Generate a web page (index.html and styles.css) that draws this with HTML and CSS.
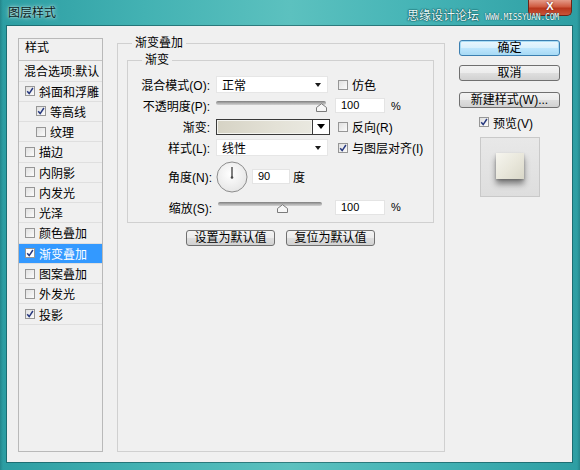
FILE: index.html
```html
<!DOCTYPE html>
<html>
<head>
<meta charset="utf-8">
<link rel="stylesheet" href="styles.css">
</head>
<body>
<div class="window">
  <div class="titlebar">
    <span class="title">图层样式</span>
    <span class="close">X</span>
    <span class="watermark"><span class="wm-cn">思缘设计论坛</span><span class="wm-en">WWW.MISSYUAN.COM</span></span>
  </div>
  <div class="client">
    <div class="styles-list">
      <div class="list-head">样式</div>
      <div class="list-row blend">混合选项:默认</div>
      <div class="list-row"><span class="cb"><svg viewBox="0 0 8 8"><path d="M1.2 4.2 L3.2 6.6 L6.9 1" /></svg></span>斜面和浮雕</div>
      <div class="list-row sub"><span class="cb"><svg viewBox="0 0 8 8"><path d="M1.2 4.2 L3.2 6.6 L6.9 1" /></svg></span>等高线</div>
      <div class="list-row sub"><span class="cb"></span>纹理</div>
      <div class="list-row"><span class="cb"></span>描边</div>
      <div class="list-row"><span class="cb"></span>内阴影</div>
      <div class="list-row"><span class="cb"></span>内发光</div>
      <div class="list-row"><span class="cb"></span>光泽</div>
      <div class="list-row"><span class="cb"></span>颜色叠加</div>
      <div class="list-row selected"><span class="cb"><svg viewBox="0 0 8 8"><path d="M1.2 4.2 L3.2 6.6 L6.9 1" /></svg></span>渐变叠加</div>
      <div class="list-row"><span class="cb"></span>图案叠加</div>
      <div class="list-row"><span class="cb"></span>外发光</div>
      <div class="list-row"><span class="cb"><svg viewBox="0 0 8 8"><path d="M1.2 4.2 L3.2 6.6 L6.9 1" /></svg></span>投影</div>
    </div>

    <fieldset class="group outer">
      <legend>渐变叠加</legend>
      <fieldset class="group inner">
        <legend>渐变</legend>
        <div class="form">
          <label class="lbl">混合模式(O):</label>
          <div class="select"><span>正常</span><i class="arrow"></i></div>
          <div class="check"><span class="cb"></span>仿色</div>

          <label class="lbl">不透明度(P):</label>
          <div class="slider op">
            <span class="track"></span>
            <svg class="thumb" viewBox="0 0 11 9"><path d="M0.5 8.5 V4.5 L5.5 0.7 L10.5 4.5 V8.5 Z" /></svg>
          </div>
          <div class="numrow"><span class="num">100</span><span class="unit">%</span></div>

          <label class="lbl">渐变:</label>
          <div class="grad"><span class="fill"></span><span class="gbtn"><i class="tri"></i></span></div>
          <div class="check"><span class="cb"></span>反向(R)</div>

          <label class="lbl">样式(L):</label>
          <div class="select"><span>线性</span><i class="arrow"></i></div>
          <div class="check"><span class="cb"><svg viewBox="0 0 8 8"><path d="M1.2 4.2 L3.2 6.6 L6.9 1" /></svg></span>与图层对齐(I)</div>

          <label class="lbl wide">角度(N):</label>
          <div class="angle">
            <svg class="dial" viewBox="0 0 32 32">
              <defs>
                <radialGradient id="dg" cx="0.45" cy="0.4" r="0.7">
                  <stop offset="0" stop-color="#ffffff"/>
                  <stop offset="1" stop-color="#e2e2e2"/>
                </radialGradient>
              </defs>
              <circle cx="16" cy="16" r="15" fill="url(#dg)" stroke="#8c8c8c"/>
              <line x1="16" y1="16.5" x2="16" y2="6" stroke="#4a4a4a" stroke-width="1.4"/>
              <circle cx="16" cy="16.5" r="1.3" fill="#4a4a4a"/>
            </svg>
            <span class="num short">90</span>
            <span class="unit deg">度</span>
          </div>

          <label class="lbl wide">缩放(S):</label>
          <div class="slider sc">
            <span class="track"></span>
            <svg class="thumb" viewBox="0 0 11 9"><path d="M0.5 8.5 V4.5 L5.5 0.7 L10.5 4.5 V8.5 Z" /></svg>
          </div>
          <div class="numrow"><span class="num">100</span><span class="unit">%</span></div>
        </div>
      </fieldset>
      <div class="defaults">
        <span class="btn">设置为默认值</span>
        <span class="btn">复位为默认值</span>
      </div>
    </fieldset>

    <div class="actions">
      <span class="btn big default">确定</span>
      <span class="btn big cancel">取消</span>
      <span class="btn big newstyle">新建样式(W)...</span>
      <div class="check preview-check"><span class="cb"><svg viewBox="0 0 8 8"><path d="M1.2 4.2 L3.2 6.6 L6.9 1" /></svg></span>预览(V)</div>
      <div class="preview"><span class="swatch"></span></div>
    </div>
  </div>
</div>
</body>
</html>
```

FILE: styles.css
```css
html, body {
  margin: 0;
  padding: 0;
}
body {
  width: 580px;
  height: 470px;
  overflow: hidden;
  font-family: "Liberation Sans", "Noto Sans CJK SC", sans-serif;
  font-size: 12px;
  color: #000;
  background: #2f9ea3;
}
.window {
  position: relative;
  width: 580px;
  height: 470px;
  box-sizing: border-box;
  padding: 0 8px 8px 7px;
  display: flex;
  flex-direction: column;
  background:
    linear-gradient(90deg, rgba(20,90,95,.35) 0, rgba(20,90,95,0) 3px, rgba(20,90,95,0) 577px, rgba(20,90,95,.35) 580px),
    linear-gradient(90deg, #2c9da2 0%, #43b2b3 25%, #5cc1bf 50%, #45b4b6 72%, #2d9ea3 100%);
}
.titlebar {
  height: 26px;
  flex: none;
  display: flex;
  align-items: flex-start;
}
.title {
  margin-left: 1px;
  line-height: 26px;
  font-size: 12px;
  color: #071a1a;
  text-shadow: 0 0 5px rgba(255,255,255,.8), 0 0 2px rgba(255,255,255,.6);
}
.close {
  margin-left: auto;
  width: 44px;
  height: 16px;
  box-sizing: border-box;
  border: 1px solid #6d2418;
  border-top: none;
  border-radius: 0 0 5px 5px;
  background: linear-gradient(#e49a88 0%, #cf5a40 45%, #b8361c 55%, #c9543a 100%);
  color: #fff;
  font-family: "Liberation Sans", sans-serif;
  font-weight: bold;
  font-size: 11px;
  line-height: 13px;
  text-align: center;
  text-shadow: 0 0 2px #5a1608;
}
.watermark {
  position: absolute;
  left: 407px;
  top: 8px;
  display: flex;
  align-items: baseline;
  gap: 6px;
  white-space: nowrap;
}
.wm-cn {
  font-family: "Noto Sans CJK SC", sans-serif;
  font-size: 12px;
  line-height: 14px;
  color: #e9fbfb;
  text-shadow: 0 0 1px #0c4b50, 0 0 1px #0c4b50, 0 0 2px #0c4b50;
}
.wm-en {
  font-family: "DejaVu Sans Mono", monospace;
  font-size: 8px;
  line-height: 9px;
  color: #f2ffff;
  letter-spacing: -0.2px;
  text-shadow: 0 0 1px #0c4b50, 0 0 1px #0c4b50;
}

.client {
  flex: 1;
  display: flex;
  align-items: stretch;
  background: #f0f0f0;
  box-shadow: 0 0 0 1px rgba(15,70,75,.55);
}

/* left list */
.styles-list {
  flex: none;
  width: 85px;
  box-sizing: border-box;
  margin: 12px 0 10px 11px;
  border: 1px solid #b9b9b9;
  background: #f0f0f0;
  overflow: hidden;
}
.list-head {
  height: 22px;
  box-sizing: border-box;
  border-bottom: 1px solid #c4c4c4;
  padding-left: 6px;
  line-height: 19px;
}
.list-row {
  height: 20.27px;
  box-sizing: border-box;
  border-bottom: 1px solid #dfdfdf;
  display: flex;
  align-items: center;
  padding-left: 6px;
  white-space: nowrap;
}
.list-row.blend {
  padding-left: 5px;
  height: 20.5px;
}
.list-row.sub {
  padding-left: 17px;
}
.list-row.selected {
  background: #3399ff;
  color: #fff;
}

/* checkbox */
.cb {
  flex: none;
  display: inline-block;
  width: 10px;
  height: 10px;
  box-sizing: border-box;
  border: 1px solid #969696;
  background: linear-gradient(135deg, #e0e0e0, #fbfbfb);
  margin-right: 4px;
  position: relative;
}
.cb svg {
  display: block;
  width: 8px;
  height: 8px;
}
.cb svg path {
  fill: none;
  stroke: #27397f;
  stroke-width: 1.5;
}
.selected .cb {
  background: #fff;
}

/* group boxes */
fieldset.group {
  min-width: 0;
  border: 1px solid #d0d0d0;
}
fieldset.group > legend {
  padding: 0 3px;
  line-height: 14px;
  font-size: 12px;
}
fieldset.outer {
  flex: none;
  width: 328px;
  box-sizing: border-box;
  margin: 10px 0 10px 14px;
  padding: 3px 10px 0 9px;
}
fieldset.outer > legend {
  margin-left: 5px;
}
fieldset.inner {
  margin: 0;
  padding: 7px 0 3px 0;
}
fieldset.inner > legend {
  margin-left: 14px;
}

.form {
  display: grid;
  grid-template-columns: 82px 113px 1fr;
  grid-template-rows: 21px 21px 21px 21px 37px 24px;
  column-gap: 6px;
  align-items: center;
}
.lbl {
  text-align: right;
  white-space: nowrap;
}
.lbl.wide {
  margin-right: -2px;
}
.select {
  width: 112px;
  height: 17px;
  box-sizing: border-box;
  background: #fff;
  border: 1px solid #e6e6e6;
  display: flex;
  align-items: center;
  padding: 0 6px 0 5px;
}
.arrow {
  margin-left: auto;
  width: 0;
  height: 0;
  border-left: 3px solid transparent;
  border-right: 3px solid transparent;
  border-top: 4px solid #1a1a1a;
}
.check {
  display: flex;
  align-items: center;
  margin-left: 3px;
  white-space: nowrap;
}
.slider {
  position: relative;
  height: 12px;
}
.track {
  position: absolute;
  left: 0;
  top: 1px;
  height: 4px;
  border-radius: 2px;
  background: linear-gradient(#7e7e7e, #b5b5b5 60%, #d2d2d2);
}
.op .track { width: 110px; }
.sc .track { left: 2px; width: 104px; }
.thumb {
  position: absolute;
  top: 3px;
  width: 11px;
  height: 9px;
}
.thumb path {
  fill: #f7f7f7;
  stroke: #7b7b7b;
}
.op .thumb { left: 100px; }
.sc .thumb { left: 61px; }

.numrow {
  display: flex;
  align-items: center;
}
.num {
  display: inline-block;
  width: 50px;
  height: 15px;
  box-sizing: border-box;
  background: #fff;
  border: 1px solid #e4e4e4;
  padding-left: 5px;
  font-size: 11px;
  line-height: 13px;
}
.num.short {
  width: 38px;
  padding-left: 5px;
}
.unit {
  margin-left: 6px;
  font-size: 11px;
}
.unit.deg {
  font-size: 12px;
  margin-left: 3px;
}

.grad {
  width: 114px;
  height: 16px;
  box-sizing: border-box;
  border: 1px solid #3a3a3a;
  display: flex;
}
.grad .fill {
  flex: 1;
  border: 1px solid #f4f4f0;
  background: linear-gradient(90deg, #d6d3c5, #e3e1d6 60%, #e9e8e0);
}
.gbtn {
  width: 16px;
  border-left: 1px solid #3a3a3a;
  background: #fff;
  display: flex;
  align-items: center;
  justify-content: center;
}
.tri {
  width: 0;
  height: 0;
  border-left: 4px solid transparent;
  border-right: 4px solid transparent;
  border-top: 5px solid #000;
}

.angle {
  grid-column: 2 / 4;
  display: flex;
  align-items: center;
}
.dial {
  width: 32px;
  height: 32px;
  margin-left: 0;
  margin-right: 4px;
}

/* buttons */
.defaults {
  display: flex;
  justify-content: center;
  gap: 11px;
  margin-top: 7px;
}
.btn {
  display: inline-block;
  box-sizing: border-box;
  width: 89px;
  height: 16px;
  border: 1px solid #707070;
  border-radius: 3px;
  background: linear-gradient(#f3f3f3 0%, #ececec 48%, #dedede 52%, #d1d1d1 100%);
  text-align: center;
  line-height: 14px;
  white-space: nowrap;
}
.actions {
  flex: none;
  width: 101px;
  margin: 14px 12px 0 14px;
  display: flex;
  flex-direction: column;
  align-items: stretch;
}
.btn.big {
  width: 101px;
  height: 16px;
}
.btn.default {
  border-color: #3c7fb1;
  background: linear-gradient(#eaf6fd 0%, #d9f0fc 48%, #bee6fd 52%, #a7d9f5 100%);
  box-shadow: inset 0 0 0 1px #a9dcf5;
}
.btn.cancel {
  margin-top: 9px;
}
.btn.newstyle {
  margin-top: 11px;
}
.preview-check {
  margin: 7px 0 0 20px;
  height: 14px;
}
.preview {
  margin: 8px 0 0 21px;
  width: 60px;
  height: 60px;
  box-sizing: border-box;
  border: 1px solid #c9c9c9;
  background: linear-gradient(#e8e8e8, #dedede);
  display: flex;
  align-items: flex-start;
  justify-content: center;
}
.swatch {
  margin-top: 15px;
  width: 28px;
  height: 26px;
  background: linear-gradient(135deg, #f6f5ef 0%, #e8e6da 55%, #d9d7c8 100%);
  box-shadow: 0 5px 6px rgba(0,0,0,.45), 0 1px 2px rgba(0,0,0,.2);
}
```
